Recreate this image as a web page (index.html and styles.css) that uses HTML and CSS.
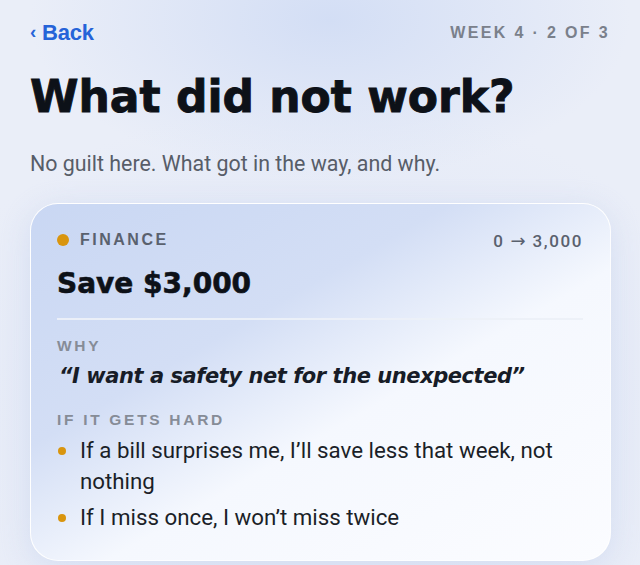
FILE: index.html
```html
<!DOCTYPE html>
<html>
<head>
<meta charset="utf-8">
<link rel="stylesheet" href="styles.css">
</head>
<body>
<div class="page">
  <header class="topbar">
    <a class="back"><span class="chev">‹</span> Back</a>
    <span class="step">WEEK 4 · 2 OF 3</span>
  </header>
  <h1 class="title">What did not work?</h1>
  <p class="subtitle">No guilt here. What got in the way, and why.</p>
  <section class="card">
    <div class="card-head">
      <span class="cat"><span class="dot"></span>FINANCE</span>
      <span class="range">0<span class="arrow">→</span>3,000</span>
    </div>
    <h2 class="goal">Save $3,000</h2>
    <div class="divider"></div>
    <div class="label">WHY</div>
    <p class="quote">“I want a safety net for the unexpected”</p>
    <div class="label label-hard">IF IT GETS HARD</div>
    <ul class="plans">
      <li>If a bill surprises me, I’ll save less that week, not nothing</li>
      <li>If I miss once, I won’t miss twice</li>
    </ul>
  </section>
</div>
</body>
</html>
```

FILE: styles.css
```css
html, body {
  margin: 0;
  padding: 0;
  height: 100%;
}
body {
  background:
    radial-gradient(ellipse 300px 160px at 330px 20px, #d3def5 0%, rgba(211,222,245,0) 100%),
    radial-gradient(ellipse 420px 300px at 320px 400px, #dde5f6 0%, rgba(221,229,246,0) 100%),
    #eaeef8;
  font-family: Roboto, "Liberation Sans", sans-serif;
  overflow: hidden;
}
.page {
  padding: 0 29px 0 30px;
}
.topbar {
  display: flex;
  justify-content: space-between;
  align-items: center;
  height: 66px;
}
.back {
  color: #2563d8;
  font-family: "Liberation Sans", sans-serif;
  font-weight: 700;
  font-size: 22px;
  letter-spacing: -0.2px;
}
.chev {
  font-size: 19px;
  font-weight: 700;
  position: relative;
  top: -2px;
}
.step {
  color: #7a808b;
  font-family: "Liberation Sans", sans-serif;
  font-weight: 700;
  font-size: 16px;
  letter-spacing: 2.35px;
  margin-right: 1px;
}
.title {
  margin: 0;
  font-family: "DejaVu Sans", sans-serif;
  font-weight: 700;
  font-size: 44px;
  letter-spacing: 0;
  line-height: 62px;
  color: #0d1118;
  -webkit-text-stroke: 0.9px #0d1118;
}
.subtitle {
  margin: 21px 0 0;
  font-size: 21.4px;
  line-height: 30px;
  color: #575d68;
}
.card {
  margin-top: 24px;
  height: 358px;
  box-sizing: border-box;
  border-radius: 28px;
  border: 1.5px solid rgba(255,255,255,0.95);
  padding: 24px 27px 0 26px;
  background:
    linear-gradient(150deg, #c9d7f3 0%, #d3def5 35%, #f5f8fe 58%, #fbfcff 100%);
  box-shadow: 0 6px 30px rgba(190,205,235,0.45);
}
.card-head {
  display: flex;
  justify-content: space-between;
  align-items: center;
  height: 24px;
}
.cat {
  display: flex;
  align-items: center;
  color: #5a616e;
  font-family: "Liberation Sans", sans-serif;
  font-weight: 700;
  font-size: 16px;
  letter-spacing: 2.5px;
}
.dot {
  width: 12px;
  height: 12px;
  border-radius: 50%;
  background: #d9950e;
  margin-right: 11px;
}
.range {
  color: #5a616e;
  font-family: Roboto, sans-serif;
  font-weight: 500;
  font-size: 17px;
  letter-spacing: 1.6px;
  margin-right: 0;
}
.arrow {
  font-family: "DejaVu Sans", sans-serif;
  font-size: 18px;
  font-weight: 400;
  letter-spacing: 0;
  margin: 0 7px 0 6px;
}
.goal {
  margin: 12px 0 0;
  font-family: "DejaVu Sans", sans-serif;
  font-weight: 700;
  font-size: 28px;
  line-height: 40px;
  letter-spacing: 0;
  color: #0d1118;
  -webkit-text-stroke: 0.6px #0d1118;
}
.divider {
  margin-top: 14px;
  height: 2px;
  background: rgba(236,240,248,0.95);
}
.label {
  margin-top: 16px;
  color: #868c97;
  font-family: "Liberation Sans", sans-serif;
  font-weight: 700;
  font-size: 15.5px;
  letter-spacing: 2.7px;
  line-height: 20px;
}
.quote {
  margin: 4px 0 0 2px;
  font-family: "DejaVu Sans", sans-serif;
  font-style: italic;
  font-weight: 700;
  font-size: 21px;
  line-height: 32px;
  color: #171c27;
  letter-spacing: -0.45px;
}
.label-hard {
  margin-top: 18px;
}
.plans {
  list-style: none;
  margin: 5px 0 0;
  padding: 0;
  display: flex;
  flex-direction: column;
  gap: 5px;
}
.plans li {
  position: relative;
  padding-left: 23px;
  font-size: 22.3px;
  line-height: 31px;
  color: #1b1f28;
}
.plans li::before {
  content: "";
  position: absolute;
  left: 1px;
  top: 12px;
  width: 8px;
  height: 8px;
  border-radius: 50%;
  background: #d9950e;
}
```
